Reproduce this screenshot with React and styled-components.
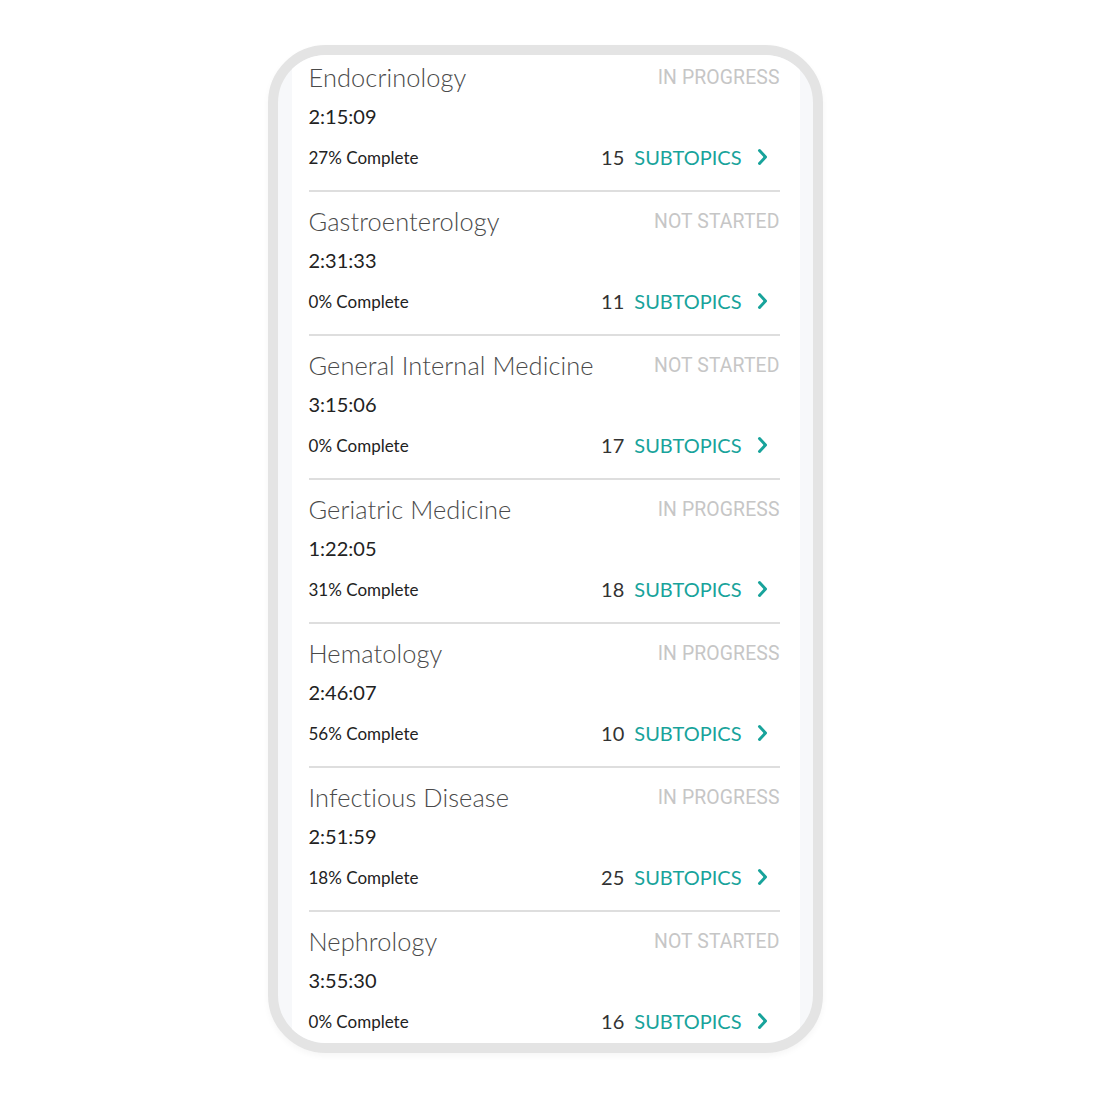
import React from 'react';
import styled, { createGlobalStyle } from 'styled-components';

const GlobalStyle = createGlobalStyle`
  html, body {
    margin: 0;
    padding: 0;
    background: #ffffff;
  }
  body {
    font-family: Lato, "Noto Sans", sans-serif;
  }
`;

const topics = [
  { name: 'Endocrinology', time: '2:15:09', pct: 27, count: 15, status: 'IN PROGRESS' },
  { name: 'Gastroenterology', time: '2:31:33', pct: 0, count: 11, status: 'NOT STARTED' },
  { name: 'General Internal Medicine', time: '3:15:06', pct: 0, count: 17, status: 'NOT STARTED' },
  { name: 'Geriatric Medicine', time: '1:22:05', pct: 31, count: 18, status: 'IN PROGRESS' },
  { name: 'Hematology', time: '2:46:07', pct: 56, count: 10, status: 'IN PROGRESS' },
  { name: 'Infectious Disease', time: '2:51:59', pct: 18, count: 25, status: 'IN PROGRESS' },
  { name: 'Nephrology', time: '3:55:30', pct: 0, count: 16, status: 'NOT STARTED' },
];

const Page = styled.div`
  width: 1100px;
  height: 1100px;
  display: flex;
  justify-content: flex-start;
  padding: 45px 0 0 268px;
  box-sizing: border-box;
`;

const Phone = styled.div`
  width: 555px;
  height: 1008px;
  box-sizing: border-box;
  border: 10px solid #e4e4e4;
  border-radius: 58px;
  background: #f7f8fa;
  overflow: hidden;
  box-shadow: 0 3px 6px rgba(0, 0, 0, 0.04);
  display: flex;
  justify-content: center;
`;

const Screen = styled.div`
  width: 508px;
  height: 100%;
  background: #ffffff;
  overflow: hidden;
`;

const List = styled.div`
  margin-top: -7px;
  padding: 0 20px 0 17px;
`;

const Row = styled.div`
  padding: 13px 0 21px;
  border-bottom: 2px solid #dedede;
`;

const TopLine = styled.div`
  display: flex;
  justify-content: space-between;
  align-items: center;
  height: 32px;
`;

const Title = styled.div`
  font-family: Lato, sans-serif;
  font-weight: 300;
  font-size: 25.4px;
  color: #4a4a4a;
  letter-spacing: 0.1px;
`;

const Status = styled.div`
  font-family: Roboto, sans-serif;
  font-size: 19.4px;
  color: #c6c6c6;
  letter-spacing: 0.1px;
`;

const Time = styled.div`
  font-family: Lato, sans-serif;
  font-size: 20px;
  color: #222;
  height: 24px;
  line-height: 24px;
  margin-top: 11px;
`;

const BottomLine = styled.div`
  display: flex;
  justify-content: space-between;
  align-items: center;
  height: 24px;
  margin-top: 17px;
`;

const Complete = styled.div`
  font-family: Lato, sans-serif;
  font-size: 17px;
  color: #222;
`;

const Subtopics = styled.a`
  display: flex;
  align-items: center;
  gap: 10px;
  padding-right: 11px;
  font-family: Lato, sans-serif;
  font-size: 20px;
  text-decoration: none;
`;

const Count = styled.span`
  color: #333;
`;

const Label = styled.span`
  color: #18a39b;
  margin-right: 5px;
`;

const Chevron = () => (
  <svg width="12" height="18" viewBox="0 0 12 18">
    <path d="M2.5 2.5 L8.5 9 L2.5 15.5" fill="none" stroke="#18a39b" strokeWidth="3" strokeLinecap="round" strokeLinejoin="round" />
  </svg>
);

export default function App() {
  return (
    <>
      <GlobalStyle />
      <Page>
        <Phone>
          <Screen>
            <List>
              {topics.map(t => (
                <Row key={t.name}>
                  <TopLine>
                    <Title>{t.name}</Title>
                    <Status>{t.status}</Status>
                  </TopLine>
                  <Time>{t.time}</Time>
                  <BottomLine>
                    <Complete>{t.pct}% Complete</Complete>
                    <Subtopics href="#">
                      <Count>{t.count}</Count>
                      <Label>SUBTOPICS</Label>
                      <Chevron />
                    </Subtopics>
                  </BottomLine>
                </Row>
              ))}
            </List>
          </Screen>
        </Phone>
      </Page>
    </>
  );
}
